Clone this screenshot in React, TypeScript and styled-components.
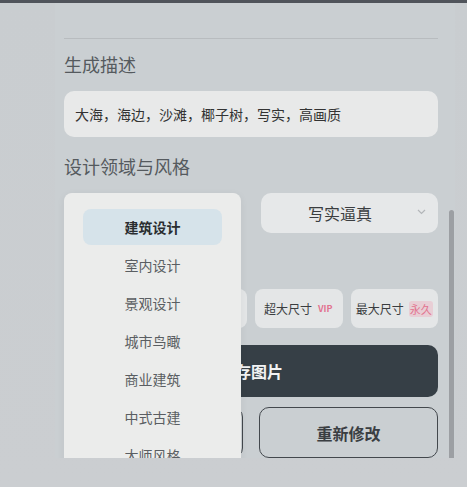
import styled, { createGlobalStyle } from "styled-components";

const GlobalStyle = createGlobalStyle`
  html, body {
    margin: 0;
    padding: 0;
    background: #c9cdd0;
    font-family: "Noto Sans CJK SC", "Noto Sans", sans-serif;
  }
`;

const StyledPage = styled.div`
  width: 467px;
  height: 487px;
  background: linear-gradient(180deg, #c9cdd0 0%, #cbced1 100%);
  overflow: hidden;
`;

const StyledTopBar = styled.div`
  height: 3px;
  background: #50545b;
`;

const StyledPanel = styled.div`
  position: relative;
  margin-left: 55px;
  width: 400px;
  height: 455px;
  overflow: hidden;
  background: #cacfd2;
`;

const StyledContent = styled.div`
  display: flex;
  flex-direction: column;
  padding: 35px 17px 0 9px;
`;

const StyledDivider = styled.div`
  height: 1px;
  background: #b8bcbf;
`;

const StyledLabel = styled.div<{ $top: number }>`
  margin-top: ${({ $top }) => $top}px;
  height: 24px;
  font-size: 18px;
  line-height: 24px;
  color: #555a5e;
`;

const StyledInput = styled.div`
  margin-top: 15px;
  height: 46px;
  display: flex;
  align-items: center;
  padding: 0 11px;
  background: #e8e9e9;
  border-radius: 10px;
  font-size: 14px;
  color: #333;
`;

const StyledSelectRow = styled.div`
  margin-top: 15px;
  display: grid;
  grid-template-columns: 1fr 1fr;
  gap: 20px;
`;

const StyledSelect = styled.div`
  height: 40px;
  position: relative;
  display: flex;
  align-items: center;
  justify-content: center;
  padding-right: 19px;
  background: #e6e8e9;
  border-radius: 10px;
  font-size: 16px;
  color: #3a3d40;
`;

const StyledChevron = styled.svg`
  position: absolute;
  right: 12px;
  top: 16px;
`;

const StyledSizeRow = styled.div`
  margin-top: 16px;
  display: grid;
  grid-template-columns: repeat(4, 1fr);
  gap: 8px;
`;

const StyledSizeButton = styled.div`
  height: 39px;
  display: flex;
  align-items: center;
  justify-content: center;
  gap: 5px;
  background: #e4e6e7;
  border-radius: 8px;
  font-size: 12px;
  color: #3a3d40;
`;

const StyledTag = styled.span<{ $filled?: boolean }>`
  font-size: ${({ $filled }) => ($filled ? "11px" : "9px")};
  font-weight: ${({ $filled }) => ($filled ? 400 : 700)};
  color: #e2738f;
  padding: 0 1px;
  border-radius: 3px;
  background: ${({ $filled }) => ($filled ? "rgba(240, 160, 180, 0.35)" : "transparent")};
`;

const StyledPrimaryButton = styled.div`
  margin-top: 17px;
  height: 52px;
  display: flex;
  align-items: center;
  justify-content: center;
  background: #363f46;
  border-radius: 10px;
  font-size: 16px;
  font-weight: 700;
  color: #f2f3f4;
`;

const StyledButtonRow = styled.div`
  margin-top: 10px;
  display: grid;
  grid-template-columns: 1fr 1fr;
  gap: 16px;
`;

const StyledOutlineButton = styled.div`
  height: 51px;
  box-sizing: border-box;
  display: flex;
  align-items: center;
  justify-content: center;
  border: 1px solid #43484d;
  border-radius: 10px;
  font-size: 16px;
  font-weight: 600;
  color: #3a3e42;
`;

const StyledMenu = styled.div`
  position: absolute;
  left: 9px;
  top: 190px;
  width: 177px;
  height: 320px;
  box-sizing: border-box;
  padding: 16px 19px 0;
  display: flex;
  flex-direction: column;
  gap: 2px;
  background: #ebeceb;
  border-radius: 8px 8px 0 0;
  box-shadow: 0 2px 8px rgba(0, 0, 0, 0.06);
`;

const StyledMenuItem = styled.div<{ $active?: boolean }>`
  height: 36px;
  flex-shrink: 0;
  display: flex;
  align-items: center;
  justify-content: center;
  border-radius: 8px;
  font-size: 14px;
  font-weight: ${({ $active }) => ($active ? 700 : 400)};
  color: ${({ $active }) => ($active ? "#2a2d30" : "#5a5e62")};
  background: ${({ $active }) => ($active ? "#d6e3ea" : "transparent")};
`;

const StyledScrollThumb = styled.div`
  position: absolute;
  left: 394px;
  top: 207px;
  width: 5px;
  height: 250px;
  border-radius: 3px;
  background: #9c9fa3;
`;

const domains = ["建筑设计", "室内设计", "景观设计", "城市鸟瞰", "商业建筑", "中式古建", "大师风格"];

// the domain menu is open, so whatever sits under it is left empty
export default function App() {
  return (
    <>
      <GlobalStyle />
      <StyledPage>
        <StyledTopBar />
        <StyledPanel>
          <StyledContent>
            <StyledDivider />
            <StyledLabel $top={13}>生成描述</StyledLabel>
            <StyledInput>大海，海边，沙滩，椰子树，写实，高画质</StyledInput>
            <StyledLabel $top={17}>设计领域与风格</StyledLabel>
            <StyledSelectRow>
              <StyledSelect />
              <StyledSelect>
                写实逼真
                <StyledChevron width="9" height="6" viewBox="0 0 9 6">
                  <path d="M1 1l3.5 3.5L8 1" fill="none" stroke="#b3b6b9" strokeWidth="1.2" />
                </StyledChevron>
              </StyledSelect>
            </StyledSelectRow>
            <StyledLabel $top={16} />
            <StyledSizeRow>
              <StyledSizeButton />
              <StyledSizeButton />
              <StyledSizeButton>
                超大尺寸<StyledTag>VIP</StyledTag>
              </StyledSizeButton>
              <StyledSizeButton>
                最大尺寸<StyledTag $filled>永久</StyledTag>
              </StyledSizeButton>
            </StyledSizeRow>
            <StyledPrimaryButton>保存图片</StyledPrimaryButton>
            <StyledButtonRow>
              <StyledOutlineButton />
              <StyledOutlineButton>重新修改</StyledOutlineButton>
            </StyledButtonRow>
          </StyledContent>
          <StyledMenu>
            {domains.map((d, i) => (
              <StyledMenuItem key={d} $active={i === 0}>
                {d}
              </StyledMenuItem>
            ))}
          </StyledMenu>
          <StyledScrollThumb />
        </StyledPanel>
      </StyledPage>
    </>
  );
}
